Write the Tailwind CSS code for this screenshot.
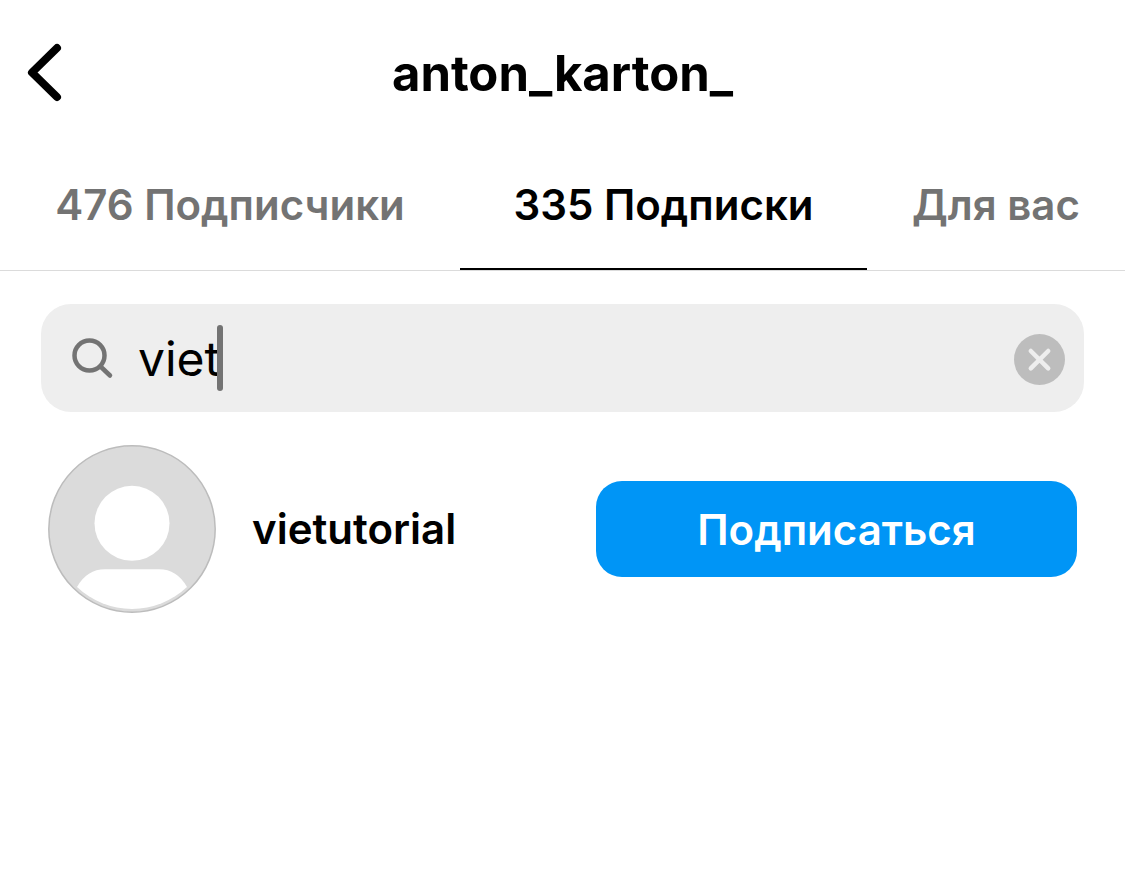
<!DOCTYPE html>
<html lang="ru">

<head>
  <meta charset="UTF-8">
  <meta name="viewport" content="width=device-width, initial-scale=1.0">
  <title>anton_karton_</title>
  <script src="https://cdn.jsdelivr.net/npm/@tailwindcss/browser@4"></script>
</head>

<body class="min-h-screen bg-white font-['Inter',sans-serif] text-black">
  <!-- Header: back button and account name -->
  <header class="grid h-36 grid-cols-[96px_1fr_96px] items-center pt-1">
    <button type="button" aria-label="Назад" class="h-16 pl-6">
      <svg class="h-16 w-10" viewBox="0 0 40 64" fill="none" stroke="currentColor" stroke-width="8" stroke-linecap="round" stroke-linejoin="round">
        <path d="M33 6L8 30.500L33 55"/>
      </svg>
    </button>
    <h1 class="text-center text-[49px] font-bold">anton_karton_</h1>
  </header>

  <!-- Tabs -->
  <nav class="flex h-[127px] border-b border-[#dbdbdb] text-[42px] font-semibold whitespace-nowrap text-[#737373]">
    <button type="button" class="flex-[460] border-b-2 border-transparent pb-1">476 Подписчики</button>
    <button type="button" class="flex-[407] border-b-2 border-black pb-1 text-black">335 Подписки</button>
    <button type="button" class="flex-[258] border-b-2 border-transparent pb-1">Для вас</button>
  </nav>

  <main class="px-[41px] pt-[33px]">
    <!-- Search -->
    <form class="flex h-[108px] items-center rounded-[30px] bg-[#eeeeee] pt-0.5 pr-[19px] pl-7">
      <label for="search" aria-label="Поиск" class="mr-[23px]">
        <svg class="size-[46px]" viewBox="0 0 46 46" fill="none" stroke="#737373" stroke-width="4.500" stroke-linecap="round">
          <circle cx="20.500" cy="19.500" r="15"/>
          <path d="M31.500 30.500L41 39.500"/>
        </svg>
      </label>
      <div class="relative flex-1">
        <input id="search" type="text" value="viet" class="w-full text-[48px] leading-[64px] outline-none">
        <span class="absolute -top-0.5 left-[79px] h-[66px] w-1.5 rounded-full bg-[#737373]"></span>
      </div>
      <button type="reset" aria-label="Очистить">
        <svg class="size-[51px]" viewBox="0 0 51 51" fill="none">
          <circle cx="25.500" cy="25.500" r="25.500" fill="#bdbdbd"/>
          <path d="M16.800 17L34.200 34.400M34.200 17L16.800 34.400" stroke="#eeeeee" stroke-width="4.500" stroke-linecap="round"/>
        </svg>
      </button>
    </form>

    <!-- Results -->
    <ul class="pt-[33px]">
      <li class="flex items-center px-[7px]">
        <svg class="size-[168px]" viewBox="0 0 168 168">
          <circle cx="84" cy="84" r="83.200" fill="#dbdbdb" stroke="#bcbcbc" stroke-width="1.500"/>
          <circle cx="84" cy="78.300" r="37.500" fill="#fff"/>
          <path d="M29 142Q39 124.300 57 124.300H111Q129 124.300 139 142A80 80 0 0 1 29 142Z" fill="#fff"/>
        </svg>
        <h2 class="flex-1 pb-0.5 pl-9 text-[42px] font-semibold">vietutorial</h2>
        <button type="button" class="h-24 w-[481px] rounded-[26px] bg-[#0095f6] text-[42px] font-semibold text-white">Подписаться</button>
      </li>
    </ul>
  </main>
</body>

</html>
